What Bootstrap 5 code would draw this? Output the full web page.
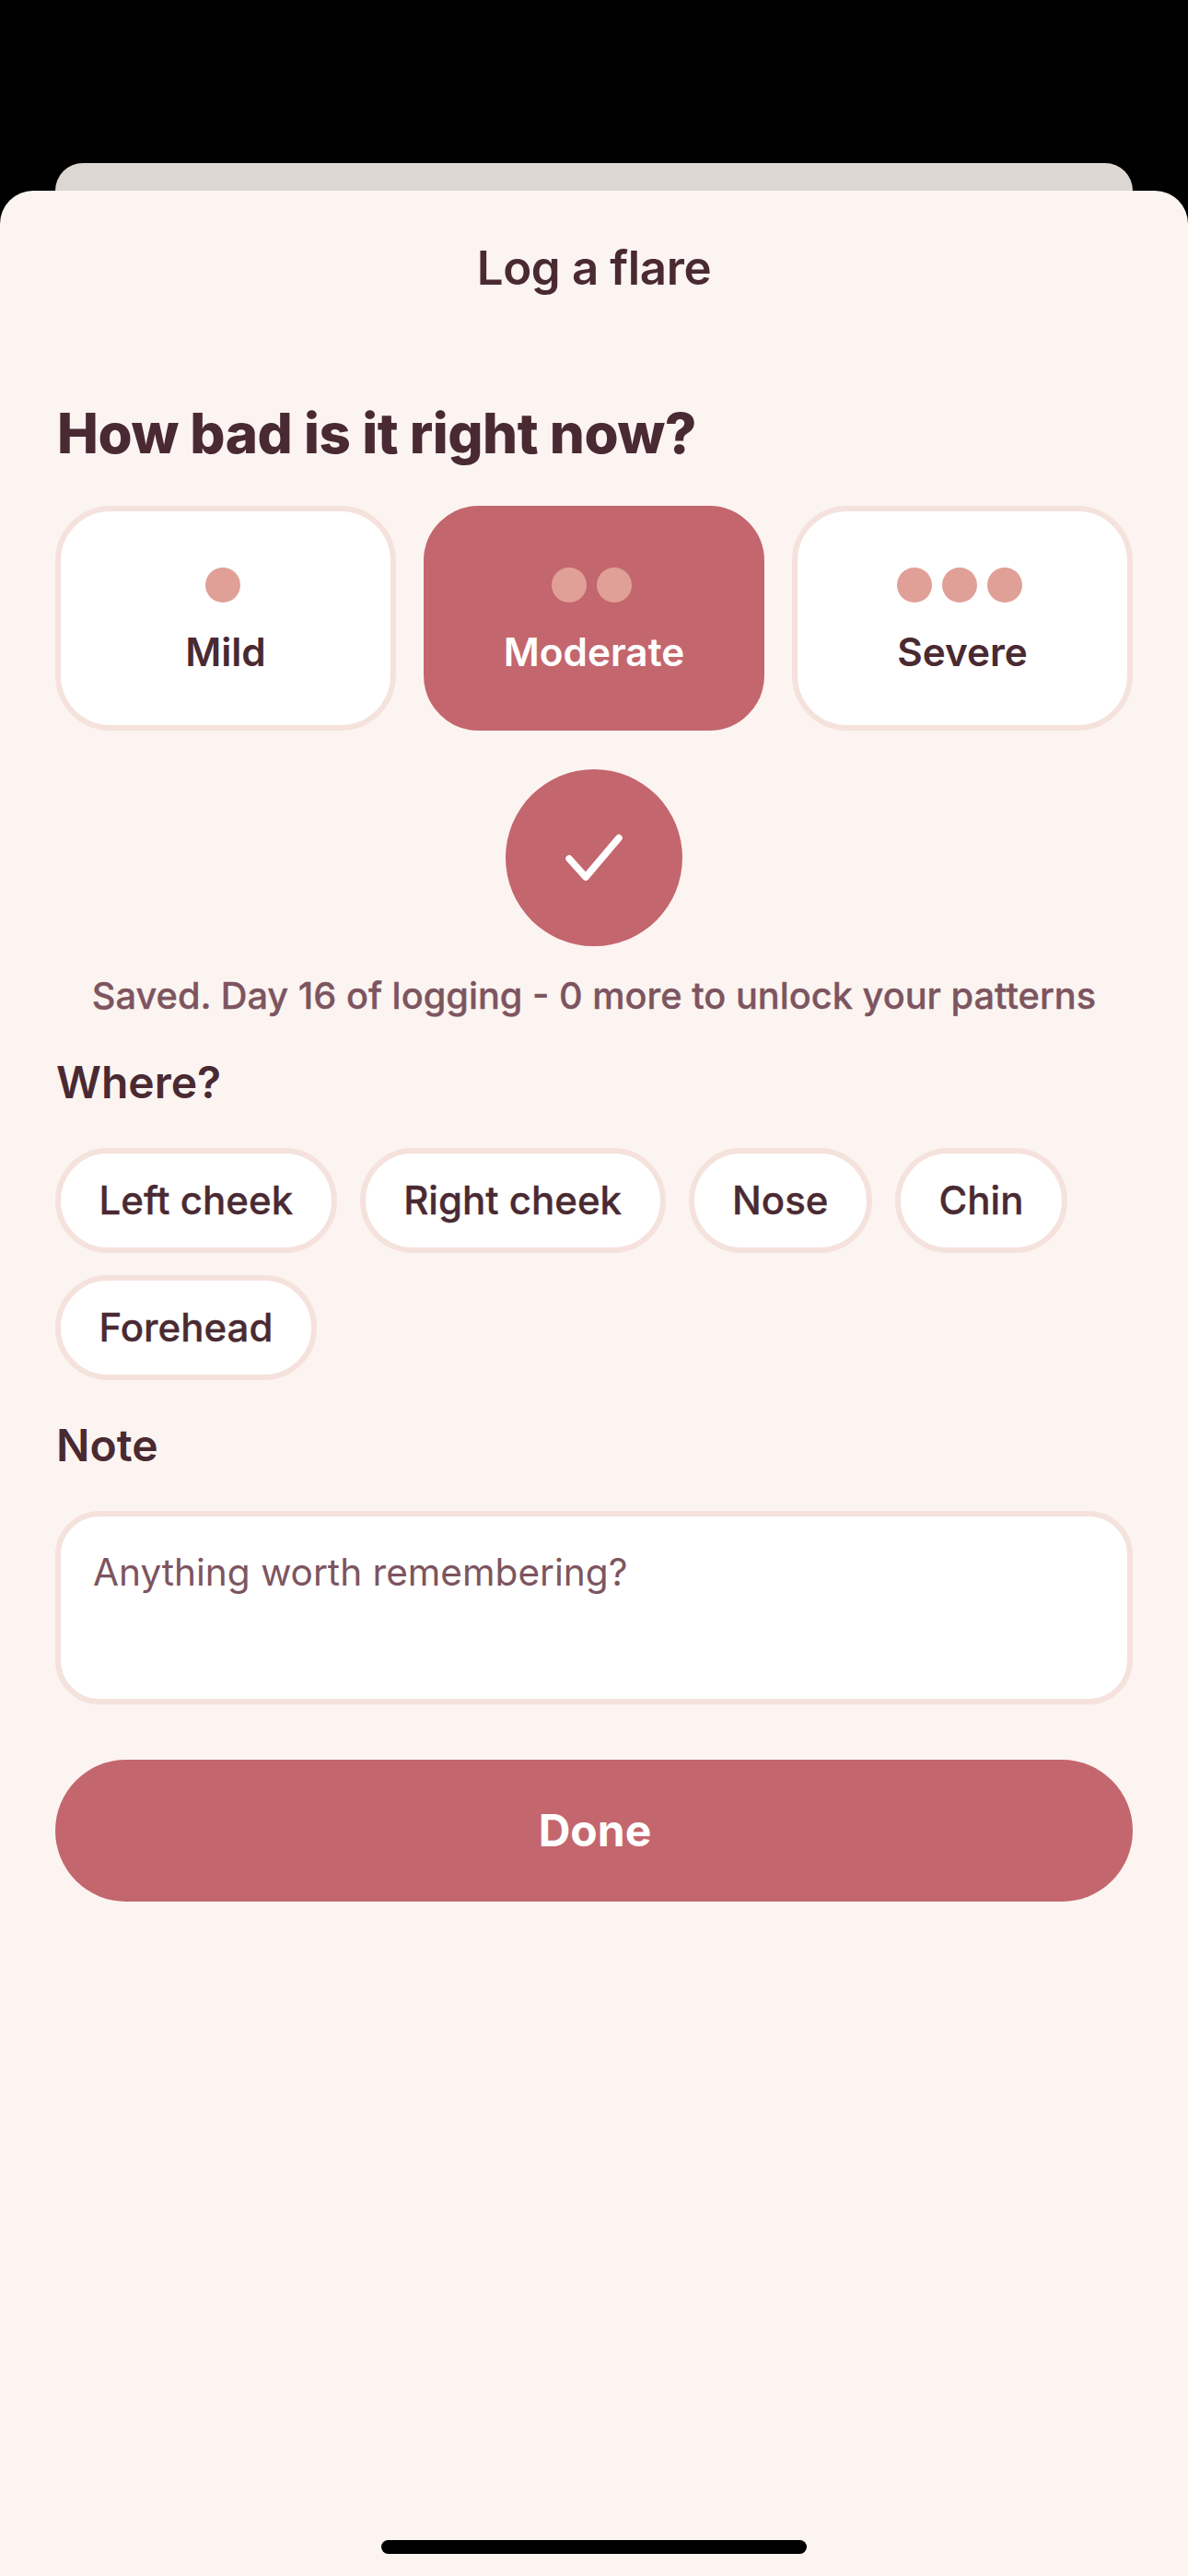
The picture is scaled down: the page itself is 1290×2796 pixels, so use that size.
<!DOCTYPE html>
<html lang="en">
<head>
<meta charset="utf-8">
<title>Log a flare</title>
<link href="https://cdn.jsdelivr.net/npm/bootstrap@5.3.0/dist/css/bootstrap.min.css" rel="stylesheet">
<style>
html, body { background: #000; height: 100%; }
body { font-family: Inter, "Liberation Sans", sans-serif; color: #4a2a32; }
.phone { height: 2796px; padding-top: 177px; }
.back-sheet { height: 40px; margin: 0 60px -10px; background: #dcd7d2; border-radius: 30px 30px 0 0; }
.front-sheet { position: relative; flex: 1; background: #fcf4f1; border-radius: 36px 36px 0 0; padding: 0 60px; }
.sheet-title { margin: 0; padding-top: 57px; height: 115px; font-size: 51px; line-height: 54px; font-weight: 600; letter-spacing: -.35px; }
.ask { margin: 112px 0 0; padding-left: 2px; font-size: 60px; line-height: 72px; font-weight: 800; letter-spacing: -.47px; }
.levels { margin-top: 43px; gap: 30px; }
.level { flex: 1 1 0; height: 244px; padding: 14px 0 0; background: #fff; border: 6px solid #f5e2dd; border-radius: 60px; color: #4a2a32; font-size: 42.3px; font-weight: 600; }
.level-on { background: #c4666e; border-color: #c4666e; color: #fff; }
.dots { gap: 11px; height: 38px; margin-bottom: 22px; padding-right: 6px; box-sizing: content-box; }
.dot { width: 38px; height: 38px; border-radius: 50%; background: #e0a097; }
.tick { width: 192px; height: 192px; margin-top: 42px; background: #c4666e; border-radius: 50%; }
.saved { margin: 30px 0 0; font-size: 39.75px; line-height: 48px; font-weight: 500; -webkit-text-stroke: .35px #7d5560; color: #7d5560; text-align: center; }
.sub { margin: 0; padding-left: 1px; font-size: 48px; line-height: 58px; font-weight: 600; }
.where { margin-top: 41px; }
.chips { margin-top: 42px; gap: 24px 25px; }
.chip { height: 114px; padding: 0 41.5px 2px; background: #fff; border: 6px solid #f5e2dd; border-radius: 57px; color: #4a2a32; font-size: 42px; font-weight: 500; -webkit-text-stroke: .35px #4a2a32; }
.note-l { margin-top: 42px; }
.note-box.form-control { display: block; margin-top: 42px; height: 210px; padding: 34px 35px; background: #fff; border: 6px solid #f5e2dd; border-radius: 48px; resize: none; color: #4a2a32; font-size: 40.6px; line-height: 54px; box-shadow: none; }
.note-box::placeholder { color: #7d5560; opacity: 1; }
.done-btn.btn { display: block; width: 100%; margin-top: 60px; height: 154px; padding: 0 0 0 2px; background: #c4666e; border: 0; border-radius: 77px; color: #fff; font-size: 48px; font-weight: 700; }
.home-bar { position: absolute; left: 414px; bottom: 24px; width: 462px; height: 15px; background: #000; border-radius: 8px; }
</style>
</head>
<body>
<div class="phone d-flex flex-column">
  <div class="back-sheet"></div>
  <div class="front-sheet">
    <h1 class="sheet-title text-center">Log a flare</h1>
    <h2 class="ask">How bad is it right now?</h2>
    <div class="levels d-flex">
      <button type="button" class="level d-flex flex-column align-items-center justify-content-center">
        <span class="dots d-flex"><span class="dot"></span></span><span>Mild</span>
      </button>
      <button type="button" class="level level-on d-flex flex-column align-items-center justify-content-center">
        <span class="dots d-flex"><span class="dot"></span><span class="dot"></span></span><span>Moderate</span>
      </button>
      <button type="button" class="level d-flex flex-column align-items-center justify-content-center">
        <span class="dots d-flex"><span class="dot"></span><span class="dot"></span><span class="dot"></span></span><span>Severe</span>
      </button>
    </div>
    <div class="tick mx-auto d-flex align-items-center justify-content-center">
      <svg width="70" height="60" viewBox="0 0 70 60" fill="none" stroke="#fff" stroke-width="7.5" stroke-linecap="round" stroke-linejoin="round"><path d="M8 31 L26 51 L62 8.5"/></svg>
    </div>
    <p class="saved">Saved. Day 16 of logging - 0 more to unlock your patterns</p>
    <h3 class="sub where">Where?</h3>
    <div class="chips d-flex flex-wrap">
      <button type="button" class="chip">Left cheek</button>
      <button type="button" class="chip">Right cheek</button>
      <button type="button" class="chip">Nose</button>
      <button type="button" class="chip">Chin</button>
      <button type="button" class="chip">Forehead</button>
    </div>
    <h3 class="sub note-l">Note</h3>
    <textarea class="note-box form-control" placeholder="Anything worth remembering?"></textarea>
    <button type="button" class="done-btn btn">Done</button>
    <div class="home-bar"></div>
  </div>
</div>
<script src="https://cdn.jsdelivr.net/npm/bootstrap@5.3.0/dist/js/bootstrap.bundle.min.js"></script>
</body>
</html>
